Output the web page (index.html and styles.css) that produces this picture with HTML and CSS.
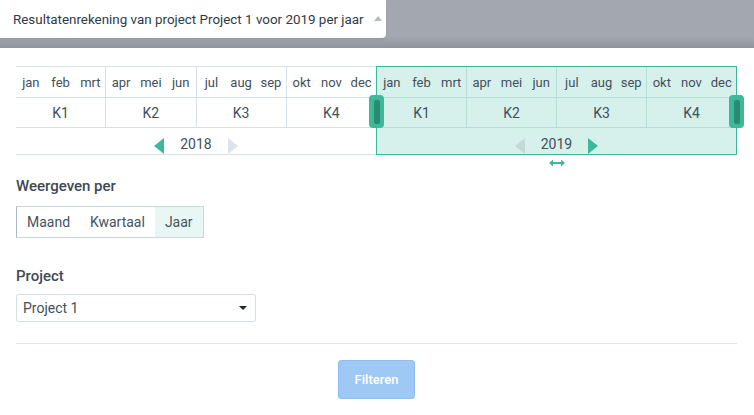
FILE: index.html
```html
<!DOCTYPE html>
<html lang="nl">
<head>
<meta charset="utf-8">
<link rel="stylesheet" href="styles.css">
</head>
<body>
<div class="topbar">
  <div class="tab">
    <span class="tab-title">Resultatenrekening van project Project 1 voor 2019 per jaar</span>
    <span class="caret-up"></span>
  </div>
</div>
<div class="panel">
  <div class="timeline">
    <div class="year">
      <div class="row months">
        <div class="q"><span>jan</span><span>feb</span><span>mrt</span></div>
        <div class="q"><span>apr</span><span>mei</span><span>jun</span></div>
        <div class="q"><span>jul</span><span>aug</span><span>sep</span></div>
        <div class="q"><span>okt</span><span>nov</span><span>dec</span></div>
      </div>
      <div class="row quarters">
        <div class="q">K1</div><div class="q">K2</div><div class="q">K3</div><div class="q">K4</div>
      </div>
      <div class="row yearrow">
        <span class="arrow left on"></span>
        <span class="ylabel">2018</span>
        <span class="arrow right off"></span>
      </div>
    </div>
    <div class="year selected">
      <div class="row months">
        <div class="q"><span>jan</span><span>feb</span><span>mrt</span></div>
        <div class="q"><span>apr</span><span>mei</span><span>jun</span></div>
        <div class="q"><span>jul</span><span>aug</span><span>sep</span></div>
        <div class="q"><span>okt</span><span>nov</span><span>dec</span></div>
      </div>
      <div class="row quarters">
        <div class="q">K1</div><div class="q">K2</div><div class="q">K3</div><div class="q">K4</div>
      </div>
      <div class="row yearrow">
        <span class="arrow left offsel"></span>
        <span class="ylabel">2019</span>
        <span class="arrow right on"></span>
      </div>
      <span class="handle h-left"><i></i></span>
      <span class="handle h-right"><i></i></span>
      <svg class="move" width="16" height="8" viewBox="0 0 16 8"><path d="M0 4 L4 0.5 L4 3 L12 3 L12 0.5 L16 4 L12 7.5 L12 5 L4 5 L4 7.5 Z" fill="#3db89b"/></svg>
    </div>
  </div>

  <div class="field first">
    <div class="label">Weergeven per</div>
    <div class="btngroup">
      <span class="seg">Maand</span><span class="seg">Kwartaal</span><span class="seg active">Jaar</span>
    </div>
  </div>

  <div class="field">
    <div class="label">Project</div>
    <div class="select"><span>Project 1</span><span class="caret-down"></span></div>
  </div>

  <div class="divider"></div>
  <div class="actions"><button class="btn">Filteren</button></div>
</div>
</body>
</html>
```

FILE: styles.css
```css
* { box-sizing: border-box; }
html, body { margin: 0; padding: 0; }
body {
  width: 754px;
  height: 415px;
  overflow: hidden;
  font-family: Roboto, "Liberation Sans", Arial, sans-serif;
  color: #424e5a;
  background: #ffffff;
}
.topbar {
  height: 48px;
  background: linear-gradient(to bottom, #a3a8b0 0px, #a3a8b0 36px, #979ca4 44px, #8f949c 48px);
}
.tab {
  width: 386px;
  height: 38px;
  background: #ffffff;
  border-bottom-right-radius: 4px;
  display: flex;
  align-items: center;
  padding-left: 13px;
  box-shadow: 0 1px 2px rgba(0,0,0,0.08);
}
.tab-title {
  font-size: 13.4px;
  color: #2f3a47;
}
.caret-up {
  margin-left: 10px;
  width: 0; height: 0;
  border-left: 4.5px solid transparent;
  border-right: 4.5px solid transparent;
  border-bottom: 5px solid #b5bbc2;
  margin-top: -2px;
}
.panel {
  width: 753px;
  padding: 18px 16px 0 16px;
}
.timeline {
  display: flex;
}
.year {
  width: 360px;
  flex: none;
  position: relative;
  border-top: 1px solid #dbe3ea;
}
.year.selected {
  width: 361px;
  border: 1px solid #3db89b;
  background: #d6f1eb;
}
.row { display: flex; }
.months { height: 31px; border-bottom: 1px solid #d6e0e9; }
.quarters { height: 30px; border-bottom: 1px solid #d6e0e9; }
.yearrow { height: 27px; border-bottom: 1px solid #d6e0e9; }
.selected .months, .selected .quarters { border-bottom-color: #b8dcd6; }
.selected .yearrow { border-bottom: none; height: 26px; }
.q {
  flex: 1;
  display: flex;
  align-items: center;
  justify-content: center;
  border-left: 1px solid #d6e0e9;
  font-size: 14px;
  color: #434f5b;
}
.selected .q { border-left-color: #b8dcd6; }
.q:first-child { border-left: none; }
.months .q { font-size: 13px; }
.months .q span { flex: 1; text-align: center; }
.yearrow {
  align-items: flex-end;
  justify-content: center;
}
.ylabel {
  font-size: 14px;
  color: #434f5b;
  margin: 5px 16px 0 16px;
  align-self: center;
}
.arrow {
  width: 0; height: 0;
  border-top: 8px solid transparent;
  border-bottom: 8px solid transparent;
}
.arrow.left { border-right: 10px solid #3db89b; }
.arrow.right { border-left: 10px solid #3db89b; }
.arrow.left.offsel { border-right-color: #c2d9d7; }
.arrow.right.off { border-left-color: #dde3ea; }
.handle {
  position: absolute;
  top: 28px;
  width: 15px;
  height: 33px;
  background: #3db89b;
  border-radius: 4px;
  display: flex;
  align-items: center;
  justify-content: center;
}
.handle i {
  display: block;
  width: 6px;
  height: 24px;
  background: #2a8b73;
  border-radius: 2px;
}
.h-left { left: -8px; }
.h-right { right: -8px; }
.move {
  position: absolute;
  left: 172px;
  bottom: -13px;
}
.field.first { margin-top: 22px; }
.field { margin-top: 29px; }
.label {
  font-size: 15px;
  font-weight: 500;
  color: #3e4955;
  line-height: 18px;
}
.btngroup {
  margin-top: 11px;
  display: inline-flex;
  height: 32px;
  border: 1px solid #cad5df;
  border-left-color: #a9b8c6;
}
.seg {
  display: flex;
  align-items: center;
  padding: 0 10px;
  font-size: 14px;
  color: #46525e;
}
.seg.active { background: #e9f7f4; }
.select {
  margin-top: 9px;
  width: 240px;
  height: 28px;
  border: 1px solid #d6dee6;
  border-radius: 3px;
  display: flex;
  align-items: center;
  justify-content: space-between;
  padding: 0 8px 0 6px;
  font-size: 14px;
  color: #434f5b;
}
.caret-down {
  width: 0; height: 0;
  border-left: 4px solid transparent;
  border-right: 4px solid transparent;
  border-top: 4px solid #1f262d;
}
.divider {
  margin-top: 21px;
  height: 1px;
  background: #dde4ea;
  width: 721px;
}
.actions {
  width: 721px;
  display: flex;
  justify-content: center;
  margin-top: 16px;
}
.btn {
  width: 77px;
  height: 39px;
  background: #9ec9f5;
  border: 1px solid #8fbdef;
  border-radius: 3px;
  color: #ffffff;
  font-family: Roboto, "Liberation Sans", Arial, sans-serif;
  font-size: 13px;
  font-weight: 500;
  padding: 0;
}
```
